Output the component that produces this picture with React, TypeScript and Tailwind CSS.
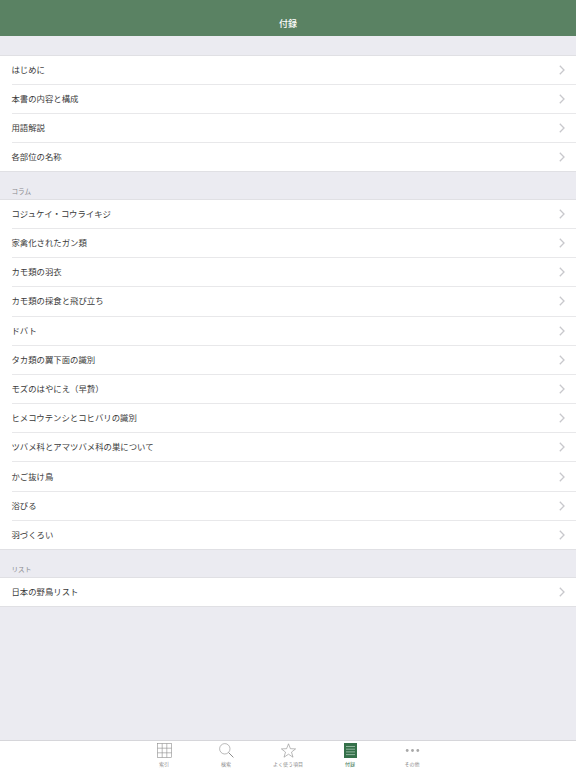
const font = { fontFamily: '"Noto Sans CJK JP", "Liberation Sans", sans-serif' };

const sections = [
  {
    title: "",
    items: ["はじめに", "本書の内容と構成", "用語解説", "各部位の名称"],
  },
  {
    title: "コラム",
    items: [
      "コジュケイ・コウライキジ",
      "家禽化されたガン類",
      "カモ類の羽衣",
      "カモ類の採食と飛び立ち",
      "ドバト",
      "タカ類の翼下面の識別",
      "モズのはやにえ（早贄）",
      "ヒメコウテンシとコヒバリの識別",
      "ツバメ科とアマツバメ科の巣について",
      "かご抜け鳥",
      "浴びる",
      "羽づくろい",
    ],
  },
  {
    title: "リスト",
    items: ["日本の野鳥リスト"],
  },
];

function Chevron() {
  return (
    <svg width="6" height="10" viewBox="0 0 6 10" fill="none" className="shrink-0">
      <path d="M0.8 0.8 L5 5 L0.8 9.2" stroke="#c8c8cc" strokeWidth="1.3" />
    </svg>
  );
}

function Row({ label, last }: { label: string; last: boolean }) {
  return (
    <div className="pl-[11.5px] bg-white">
      <div className={`flex items-center justify-between pr-[11.5px] ${last ? "h-[28.2px]" : "h-[29.2px] border-b border-[#e8e8ea]"}`}>
        <span className="mb-[1.5px] text-[8.4px] leading-none text-[#3a3a3a]">{label}</span>
        <Chevron />
      </div>
    </div>
  );
}

function Section({ title, items }: { title: string; items: string[] }) {
  return (
    <div>
      <div className={`flex items-end pl-[11.5px] pb-[4px] text-[6.6px] leading-none text-[#88888d] ${title ? "h-[26.5px]" : "h-[18.5px]"}`}>
        {title}
      </div>
      <div className="border-y border-[#e0e0e4]">
        {items.map((item, i) => (
          <Row key={item} label={item} last={i === items.length - 1} />
        ))}
      </div>
    </div>
  );
}

function GridIcon() {
  return (
    <svg width="15" height="15" viewBox="0 0 15 15" fill="none" stroke="#8c8c8c" strokeWidth="0.6">
      <rect x="0.5" y="0.5" width="14" height="14" />
      <path d="M5.2 0.5V14.5M9.8 0.5V14.5M0.5 5.2H14.5M0.5 9.8H14.5" />
    </svg>
  );
}

function SearchIcon() {
  return (
    <svg width="15" height="15" viewBox="0 0 15 15" fill="none" stroke="#8c8c8c">
      <circle cx="5.8" cy="5.8" r="5.2" strokeWidth="0.6" />
      <path d="M9.6 9.6L14.4 14.4" strokeWidth="1" />
    </svg>
  );
}

function StarIcon() {
  return (
    <svg width="15" height="15" viewBox="0 0 15 15" fill="none" stroke="#8c8c8c" strokeWidth="0.6">
      <path d="M7.5 0.8L9.4 5.7L14.6 5.9L10.5 9.1L12 14.2L7.5 11.2L3 14.2L4.5 9.1L0.4 5.9L5.6 5.7Z" />
    </svg>
  );
}

function ListIcon() {
  return (
    <svg width="13" height="15" viewBox="0 0 13 15" fill="none">
      <rect width="13" height="15" fill="#35714a" />
      <path d="M2 3.5H11M2 6.2H11M2 8.9H11M2 11.6H11" stroke="#b9d2c1" strokeWidth="0.7" />
    </svg>
  );
}

function DotsIcon() {
  return (
    <svg width="15" height="15" viewBox="0 0 15 15" fill="#a8a8a8">
      <circle cx="2.2" cy="7.5" r="1.4" />
      <circle cx="7.5" cy="7.5" r="1.4" />
      <circle cx="12.8" cy="7.5" r="1.4" />
    </svg>
  );
}

const tabs = [
  { label: "索引", icon: <GridIcon /> },
  { label: "検索", icon: <SearchIcon /> },
  { label: "よく使う項目", icon: <StarIcon /> },
  { label: "付録", icon: <ListIcon />, active: true },
  { label: "その他", icon: <DotsIcon /> },
];

export default function App() {
  return (
    <div className="w-[576px] h-[768px] flex flex-col bg-[#ebebf1] overflow-hidden" style={font}>
      <div className="h-[36px] shrink-0 bg-[#5a8263] flex items-end justify-center pb-[8px]">
        <span className="text-[9px] leading-none text-white font-medium">付録</span>
      </div>
      <div className="flex-1">
        {sections.map((s) => (
          <Section key={s.title} title={s.title} items={s.items} />
        ))}
      </div>
      <div className="h-[28px] shrink-0 bg-white border-t border-[#d6d6da] flex justify-center gap-[2px]">
        {tabs.map((t) => (
          <div key={t.label} className="w-[60px] flex flex-col items-center pt-[2px]">
            <div className="h-[15px] flex items-center">{t.icon}</div>
            <span className={`mt-[3px] text-[5px] leading-none whitespace-nowrap ${t.active ? "text-[#35714a]" : "text-[#8c8c8c]"}`}>
              {t.label}
            </span>
          </div>
        ))}
      </div>
    </div>
  );
}
